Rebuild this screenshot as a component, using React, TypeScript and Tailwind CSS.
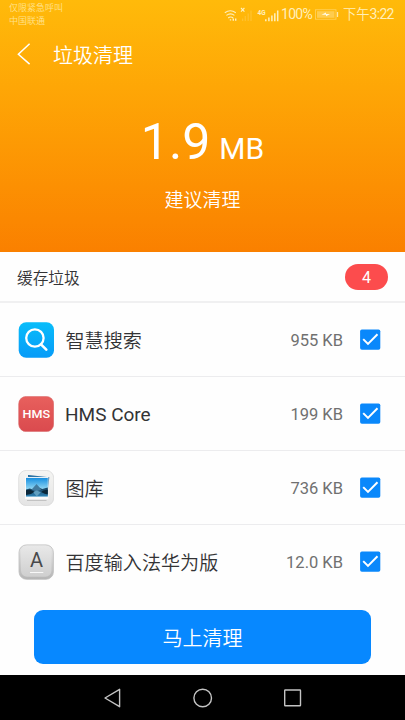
import type { ReactNode } from "react";

function SearchIcon() {
  return (
    <svg className="h-9 w-9" viewBox="0 0 36 36">
      <defs>
        <linearGradient id="searchBg" x1="0" y1="0" x2="0" y2="1">
          <stop offset="0" stopColor="#08bdfa" />
          <stop offset="1" stopColor="#079bf8" />
        </linearGradient>
      </defs>
      <rect x="0.7" y="0.2" width="35.3" height="35.6" rx="7.5" fill="url(#searchBg)" />
      <circle cx="16.9" cy="16" r="8.7" fill="none" stroke="#fff" strokeWidth="2.3" />
      <path d="M23 22.3 28.3 27.6" stroke="#fff" strokeWidth="2.6" strokeLinecap="round" />
    </svg>
  );
}

function HmsIcon() {
  return (
    <svg className="h-9 w-9" viewBox="0 0 36 36">
      <defs>
        <linearGradient id="hmsBg" x1="0" y1="0" x2="0" y2="1">
          <stop offset="0" stopColor="#e8605d" />
          <stop offset="1" stopColor="#da4a4e" />
        </linearGradient>
      </defs>
      <rect x="0.7" y="0.4" width="35" height="35.2" rx="7.5" fill="url(#hmsBg)" stroke="#d9686a" strokeWidth="0.6" />
      <text x="4.6" y="22" textLength="27.6" lengthAdjust="spacingAndGlyphs" fill="#fff" fontSize="11.2" fontWeight="500" fontFamily="Roboto, sans-serif">
        HMS
      </text>
    </svg>
  );
}

function GalleryIcon() {
  return (
    <svg className="h-9 w-9" viewBox="0 0 36 36">
      <defs>
        <linearGradient id="galBg" x1="0" y1="0" x2="0" y2="1">
          <stop offset="0" stopColor="#f5f5f3" />
          <stop offset="1" stopColor="#e4e4e4" />
        </linearGradient>
        <linearGradient id="galSky" x1="0" y1="0" x2="0" y2="1">
          <stop offset="0" stopColor="#168fe0" />
          <stop offset="0.65" stopColor="#9bdcf5" />
        </linearGradient>
        <linearGradient id="galLake" x1="0" y1="0" x2="0" y2="1">
          <stop offset="0" stopColor="#12324a" />
          <stop offset="1" stopColor="#2f82b4" />
        </linearGradient>
      </defs>
      <rect x="0.7" y="0.4" width="35" height="35.2" rx="7.5" fill="url(#galBg)" stroke="#d6d6d6" strokeWidth="0.7" />
      <path d="M10 5 31.3 7.3 30 19 10 18Z" fill="#17659c" />
      <path d="M7 6.9h23.4v22.3H7Z" fill="#fafafa" />
      <path d="M8 7.9h21.8v18.5H8Z" fill="url(#galSky)" />
      <path d="M8 19.6 11.8 18.4l3 1 2.5-2.2 2-1.5 2.5 2.3 2.5 1 5.5-1.6v9H8Z" fill="url(#galLake)" />
      <path d="m13.6 19.5 3.4-3.8 1.6-1.6 2 2.3 2.5 3.3-4.7 1.8Z" fill="#427b9f" />
      <path d="m14.8 22 4-1.5 4 1.7-4 4Z" fill="#609fc0" />
      <path d="M8 20.2 11.8 19.5l4.7 2.3-3.5 2.1-5 1ZM29.8 19.4l-4.7 1.2-2 1.4 3.5 1.8 3.2.6Z" fill="#0b2739" />
      <path d="M9 30.5h19.5" stroke="#b9b9b9" strokeWidth="0.8" />
    </svg>
  );
}

function KeyboardIcon() {
  return (
    <svg className="h-9 w-9" viewBox="0 0 36 36">
      <defs>
        <linearGradient id="keyBg" x1="0" y1="0" x2="0" y2="1">
          <stop offset="0" stopColor="#e9e9e9" />
          <stop offset="1" stopColor="#b5b5b5" />
        </linearGradient>
        <linearGradient id="keyTop" x1="0" y1="0" x2="0" y2="1">
          <stop offset="0" stopColor="#e8e8e8" />
          <stop offset="1" stopColor="#cfcfcf" />
        </linearGradient>
      </defs>
      <rect x="1" y="0.9" width="34.4" height="34.4" rx="7.5" fill="url(#keyBg)" stroke="#bdbdbd" strokeWidth="0.8" />
      <rect x="3" y="1.8" width="30.4" height="31" rx="6" fill="url(#keyTop)" />
      <text x="18.6" y="23" textAnchor="middle" fill="#48494b" fontSize="20" fontFamily="Roboto, sans-serif">
        A
      </text>
      <path d="M12 28.5h13.3" stroke="#f8f8f8" strokeWidth="1" />
    </svg>
  );
}

function CheckBox() {
  return (
    <svg className="ml-[17px] h-[21px] w-[21px]" viewBox="0 0 21 21">
      <rect x="0.1" y="0.4" width="20.2" height="20.4" rx="1.8" fill="#0a88fb" />
      <path d="M3.2 10.1 8 14.9 17.5 5.3" fill="none" stroke="#fff" strokeWidth="2" />
    </svg>
  );
}

function StatusIcons() {
  return (
    <svg className="h-5 w-[58px]" viewBox="0 0 58 20" fill="none" stroke="#fff0bd" strokeWidth="1.1">
      <path d="M1.8 8.8q5.5-4 11 0M3.4 11.4q4.2-3 8 0M5.2 14q2.4-1.9 5 0" />
      <path d="M7.5 15.3v1.2M10.3 14.4v2.4M12.7 14.4v2.4" strokeWidth="1.4" />
      <path d="m18 4 3.4 3.6M21.4 4 18 7.6" />
      <path d="M19.6 17v-2.6M22.3 17v-5M25.2 17v-7.6M28 17V6.5" strokeWidth="1.3" opacity="0.2" />
      <path d="M42.8 17.3v-2M45.9 17.3v-3.8M48.9 17.3v-5.8M51.8 17.3v-8M54.7 17.3V6.4" strokeWidth="1.5" />
      <text x="34.6" y="11" fill="#fff0bd" stroke="none" fontSize="6.4" fontWeight="700" fontFamily="Roboto, sans-serif">
        4G
      </text>
    </svg>
  );
}

function Battery() {
  return (
    <svg className="ml-[3px] h-[11px] w-6" viewBox="0 0 24 11" fill="none">
      <rect x="0.5" y="0.8" width="20.5" height="9.4" stroke="#ffe08b" strokeWidth="0.8" opacity="0.7" />
      <rect x="2" y="2.2" width="17.5" height="6.6" fill="#ffdf88" opacity="0.55" />
      <path d="M6.5 5.8 11 3.5v1.4h4L11 7.3V5.8Z" fill="#fffbe8" />
      <path d="M22.5 3v5" stroke="#ffe9aa" strokeWidth="1.3" />
    </svg>
  );
}

type Item = { name: string; size: string; icon: ReactNode };

const items: Item[] = [
  { name: "智慧搜索", size: "955 KB", icon: <SearchIcon /> },
  { name: "HMS Core", size: "199 KB", icon: <HmsIcon /> },
  { name: "图库", size: "736 KB", icon: <GalleryIcon /> },
  { name: "百度输入法华为版", size: "12.0 KB", icon: <KeyboardIcon /> },
];

export default function App() {
  return (
    <div className="flex h-[720px] w-[405px] flex-col overflow-hidden bg-[#fefefe] font-[Roboto,'Noto_Sans_CJK_SC_DemiLight','Noto_Sans_CJK_SC',sans-serif] text-[#333335]">
      <header className="flex h-[252px] flex-col bg-linear-to-b from-[#ffba0a] to-[#fa8000] text-white">
        <div className="flex h-7 items-start justify-between pr-[9px] pl-[9px] text-[#ffefba]">
          <div className="pt-[2px] text-[9px] leading-[12.5px] font-[350] text-[#ffe28e]">
            <div>仅限紧急呼叫</div>
            <div>中国联通</div>
          </div>
          <div className="flex h-7 items-center">
            <StatusIcons />
            <span className="w-[31px] text-[14px] leading-5 tracking-[-0.7px]">100%</span>
            <Battery />
            <span className="ml-[4px] w-[53px] text-[13.3px] leading-5 font-[350] whitespace-nowrap">
              下午<span className="text-[14px] font-normal tracking-[-0.7px]">3:22</span>
            </span>
          </div>
        </div>
        <div className="flex h-[54px] items-center pl-[17px]">
          <svg className="h-6 w-4" viewBox="0 0 16 24" fill="none" stroke="#fff" strokeWidth="1.5">
            <path d="M12.6 0.8 1.4 11.3l11.2 9.8" />
          </svg>
          <h1 className="ml-5 pt-[2px] text-[20px] leading-6 font-[350]">垃圾清理</h1>
        </div>
        <div className="flex h-[100px] items-baseline justify-center pt-[31px]">
          <span className="text-[50px] leading-[58px]">1.9</span>
          <span className="ml-[9px] text-[30px] leading-[58px]">MB</span>
        </div>
        <div className="pt-[5px] text-center text-[19px] leading-7 font-[350]">建议清理</div>
      </header>

      <div className="flex h-[51px] items-center justify-between border-b-2 border-[#f0f0f1] pr-[17px] pl-[17px]">
        <h2 className="pt-[4px] text-[15.7px] font-[350]">缓存垃圾</h2>
        <span className="flex h-[26px] w-[43px] items-center justify-center rounded-full bg-[#fc4c4d] pt-[2px] text-[16px] text-white">4</span>
      </div>

      <ul className="flex h-[296px] flex-col">
        {items.map((item) => (
          <li key={item.name} className="flex h-[74px] shrink-0 items-center border-b border-[#ececee] pr-6 pl-[18px] last:border-transparent">
            {item.icon}
            <span className={item.name === "HMS Core" ? "ml-[11px] flex-1 pt-[3px] text-[19px]" : "ml-[11.5px] flex-1 pt-[6px] text-[19.1px] font-[350]"}>
              {item.name}
            </span>
            <span className="pt-[4px] text-[16.5px] text-[#707070]">{item.size}</span>
            <CheckBox />
          </li>
        ))}
      </ul>

      <div className="flex h-[76px] shrink-0 items-start justify-center pt-[11px]">
        <button className="h-[54px] w-[337px] rounded-[9px] bg-[#0788ff] pt-[3px] text-[20px] text-white">马上清理</button>
      </div>

      <nav className="flex h-[45px] shrink-0 items-center justify-center gap-[62px] bg-black">
        <svg className="h-7 w-7" viewBox="0 0 28 28" fill="none" stroke="#c4c4c4" strokeWidth="1.4" strokeLinejoin="round">
          <path d="M20.6 5.3v17.4L6 14Z" />
        </svg>
        <svg className="h-7 w-7" viewBox="0 0 28 28" fill="none" stroke="#c4c4c4" strokeWidth="1.4">
          <circle cx="13.7" cy="14" r="8.8" />
        </svg>
        <svg className="h-7 w-7" viewBox="0 0 28 28" fill="none" stroke="#c4c4c4" strokeWidth="1.4">
          <rect x="5.7" y="6" width="15.8" height="15.8" rx="0.6" />
        </svg>
      </nav>
    </div>
  );
}
